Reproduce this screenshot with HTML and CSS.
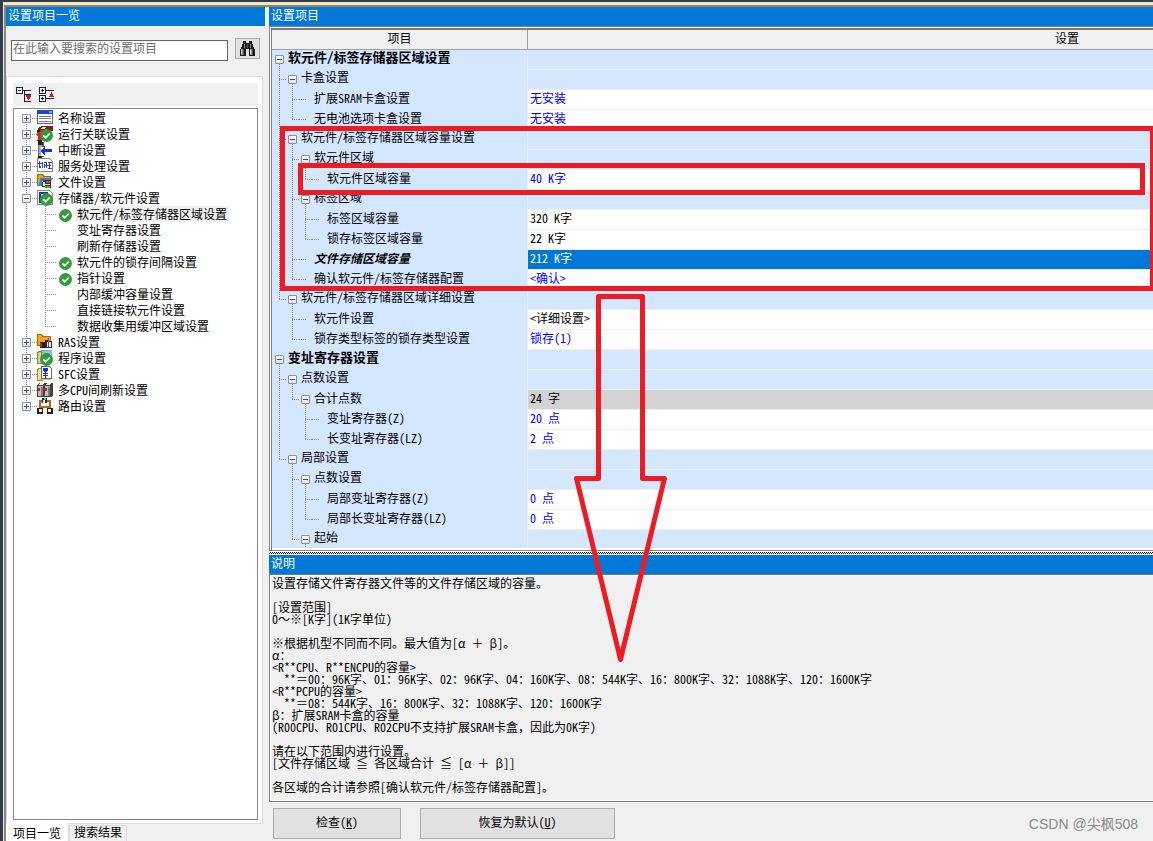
FILE: index.html
```html
<!DOCTYPE html>
<html lang="zh-CN">
<head>
<meta charset="utf-8">
<title>设置项目</title>
<link rel="stylesheet" href="styles.css">
</head>
<body>
<svg class="defs" aria-hidden="true">
  <symbol id="ok" viewBox="0 0 13 13"><circle cx="6.5" cy="6.5" r="6.5" fill="#339a3c"/><path d="M3.2 6.4l2.4 2.3 4.2-4.2" fill="none" stroke="#fff" stroke-width="1.7"/></symbol>
</svg>
<div class="app">
<span class="doc-tab"></span>
<div class="inner">
<aside class="side">
  <h2 class="title">设置项目一览</h2>
  <div class="search">
    <input type="text" class="search-box" aria-label="搜索设置项目" placeholder="在此输入要搜索的设置项目">
    <button type="button" class="find" aria-label="搜索">
      <svg width="17" height="16" viewBox="0 0 17 16" shape-rendering="crispEdges"><path fill="#1c1c1c" d="M4 0h3v2h3V0h3v3h1v3h1v2h1v7h-6V8H7v7H1V8h1V6h1V3h1z"/><path fill="#8d8d8d" d="M2 8h2v6H2zM11 8h2v6h-2zM5 3h1v4H5zM11 3h1v4h-1z"/><path fill="#555" d="M4 8h1v6H4zM13 8h1v6h-1zM8 3h1v4H8z"/><path fill="#ddd" d="M2 9h1v4H2zM11 9h1v4h-1z"/></svg>
    </button>
  </div>
  <div class="page">
    <div class="tools">
      <button type="button" class="tool" aria-label="全部折叠"><svg width="16" height="16" viewBox="0 0 16 16" shape-rendering="crispEdges"><path d="M.5.5h6v6h-6zM7 3.500h8M8.500 3.500v11h6M8.500 7.500h6" fill="none" stroke="#1d1d44"/><path d="M2 3.500h3" stroke="#1d1d44"/><path fill="#e01000" d="M10 8h5v2h-1v2h-1v1h-1v-1h-1v-2h-1z"/></svg></button>
      <button type="button" class="tool" aria-label="全部展开"><svg width="16" height="16" viewBox="0 0 16 16" shape-rendering="crispEdges"><path d="M.5.500h6v6h-6zM.5 8.500h6v6h-6zM7 3.500h8M7 11.500h8M2 3.500h3M3.500 2v3M2 11.500h3M3.500 10v3" fill="none" stroke="#1d1d44"/><path fill="#e01000" d="M12 5h1v2h1v2h1v1h-5V9h1V7h1z"/></svg></button>
    </div>
    <ul class="tree">
      <li><span class="s first"><button type="button" class="x plus" aria-label="展开"></button></span><span class="ic"><svg width="16" height="16" viewBox="0 0 16 16" shape-rendering="crispEdges"><path fill="#fff" stroke="#666" d="M.5.500h15v13H.5z"/><path fill="#1748d0" d="M0 0h16v4H0z"/><path fill="#6aa5ff" d="M12 1h3v2h-3z"/><path stroke="#77a" d="M2 6.500h12M2 8.500h12M2 11.500h12"/></svg></span><span class="lb">名称设置</span></li>
      <li><span class="s v"><button type="button" class="x plus" aria-label="展开"></button></span><span class="ic"><svg width="16" height="16" viewBox="0 0 16 16" shape-rendering="crispEdges"><path fill="#8c1717" d="M1 2l4-2h11v5H1z"/><path fill="#eee" d="M5 1h5l-3 2H3z"/><path fill="#f01818" d="M0 4h5v11H1z"/><path fill="#222" d="M0 4h3v2H0zM0 14h5v2H1z"/></svg><svg class="badge"><use href="#ok"/></svg></span><span class="lb">运行关联设置</span></li>
      <li><span class="s v"><button type="button" class="x plus" aria-label="展开"></button></span><span class="ic"><svg width="16" height="16" viewBox="0 0 16 16" shape-rendering="crispEdges"><path fill="#666" d="M1 0h6v15H1z"/><path fill="#aaa" d="M2 3h3v11H2z"/><path fill="#222" d="M1 0h5v3H1zM1 14h4v2H1z"/><path fill="#fff" d="M4 5h4v9H4z"/><path fill="#1530f0" d="M8 4v3h7v3H8v3H7v-1H6v-1H5v-1H4V8h1V7h1V6h1V4z"/></svg></span><span class="lb">中断设置</span></li>
      <li><span class="s v"><button type="button" class="x plus" aria-label="展开"></button></span><span class="ic"><svg width="16" height="16" viewBox="0 0 16 16" shape-rendering="crispEdges"><path fill="#fff" stroke="#888" d="M.5.500h12l3 3v10H.5z"/><path fill="none" stroke="#2b3fe0" d="M1 5.500h4M2.500 3v7M5.500 4v6M7 4.500h3M7.500 6v4M9.500 4v6M11 4.500h4M12.500 5v6M7 7.500h7M11 10.500h4M3.500 8v2"/></svg></span><span class="lb">服务处理设置</span></li>
      <li><span class="s v"><button type="button" class="x plus" aria-label="展开"></button></span><span class="ic"><svg width="16" height="16" viewBox="0 0 16 16" shape-rendering="crispEdges"><path fill="#f5a010" stroke="#a66200" d="M.5.500h5l1 2h7v9H.5z"/><path fill="#2389f0" d="M3 4h13l-2 3H5v5H2z"/><path fill="#333" d="M6 6h8v8H8v-1H5V8h1z"/><path fill="#eee" d="M6 8h2v4H6z"/><path fill="#f33" d="M9 7h4v2H9z"/><path fill="#fc9" d="M8 10h5v1H8z"/><path fill="#2b4" d="M8 12h5v2H8z"/></svg></span><span class="lb">文件设置</span></li>
      <li><span class="s v"><button type="button" class="x" aria-label="折叠"></button></span><span class="ic"><svg width="16" height="16" viewBox="0 0 16 16" shape-rendering="crispEdges"><path fill="#fff" stroke="#888" d="M.5.500h12l3 3v11H.5z"/><path fill="none" stroke="#1c2ab8" stroke-width="2" d="M3 13V3h7v5"/></svg><svg class="badge"><use href="#ok"/></svg></span><span class="lb">存储器/软元件设置</span></li>
      <li><span class="s v"></span><span class="s t"></span><span class="ic"><svg class="mark"><use href="#ok"/></svg></span><span class="lb sel">软元件/标签存储器区域设置</span></li>
      <li><span class="s v"></span><span class="s t"></span><span class="ic"></span><span class="lb">变址寄存器设置</span></li>
      <li><span class="s v"></span><span class="s t"></span><span class="ic"></span><span class="lb">刷新存储器设置</span></li>
      <li><span class="s v"></span><span class="s t"></span><span class="ic"><svg class="mark"><use href="#ok"/></svg></span><span class="lb">软元件的锁存间隔设置</span></li>
      <li><span class="s v"></span><span class="s t"></span><span class="ic"><svg class="mark"><use href="#ok"/></svg></span><span class="lb">指针设置</span></li>
      <li><span class="s v"></span><span class="s t"></span><span class="ic"></span><span class="lb">内部缓冲容量设置</span></li>
      <li><span class="s v"></span><span class="s t"></span><span class="ic"></span><span class="lb">直接链接软元件设置</span></li>
      <li><span class="s v"></span><span class="s l"></span><span class="ic"></span><span class="lb">数据收集用缓冲区域设置</span></li>
      <li><span class="s v"><button type="button" class="x plus" aria-label="展开"></button></span><span class="ic"><svg width="16" height="16" viewBox="0 0 16 16" shape-rendering="crispEdges"><path fill="#f9a41a" stroke="#b06c00" d="M.5.500h4l1 2h8v9H.5z"/><path fill="#222" d="M3 8h6v6H3zM8 6h3v2H8z"/><path fill="#d22" d="M3 9h2v4H3z"/><path fill="#e8ecff" stroke="#334" d="M9.500 7.500h5v6h-5z"/><path stroke="#55a" d="M11.500 4v9"/></svg></span><span class="lb">RAS设置</span></li>
      <li><span class="s v"><button type="button" class="x plus" aria-label="展开"></button></span><span class="ic"><svg width="16" height="16" viewBox="0 0 16 16" shape-rendering="crispEdges"><path fill="#fff" stroke="#8ab" d="M4.500.500h10v7h-10z"/><path fill="#7cc4f5" d="M5 1h10v3H5z"/><path fill="#d9d08a" stroke="#8a8340" d="M1.500 1.500h3v12h-4v-10z"/></svg><svg class="badge"><use href="#ok"/></svg></span><span class="lb">程序设置</span></li>
      <li><span class="s v"><button type="button" class="x plus" aria-label="展开"></button></span><span class="ic"><svg width="16" height="16" viewBox="0 0 16 16" shape-rendering="crispEdges"><path fill="#fbe08a" stroke="#a98c3a" d="M1.500 2.500h4v12h-5v-10z"/><path fill="#fff" stroke="#667" d="M4.500.500h8l2 2v10h-10z"/><path fill="#1b2fe0" d="M6 2h5v3h-1v1H7V5H6zM8 6h1v1h2v1H9v1h2v1H9v2H8v-2H6V9h2V8H6V7h2z"/><path fill="#e0c25c" d="M2 13h12v1H2z"/></svg></span><span class="lb">SFC设置</span></li>
      <li><span class="s v"><button type="button" class="x plus" aria-label="展开"></button></span><span class="ic"><svg width="16" height="16" viewBox="0 0 16 16" shape-rendering="crispEdges"><path fill="#444" d="M2 1h14v12l-2 2H0V4z"/><path fill="#bdbdbd" d="M1 4h5v10H1zM8 4h5v10H8z"/><path fill="#eee" d="M3 1h4L5 3H1zM10 1h4l-2 2H8z"/><path fill="#e11" d="M1 6h2v3H1zM8 6h2v3H8z"/><path fill="#777" d="M4 5h2v9H4zM11 5h2v9h-2z"/></svg></span><span class="lb">多CPU间刷新设置</span></li>
      <li><span class="s l"><button type="button" class="x plus" aria-label="展开"></button></span><span class="ic"><svg width="16" height="16" viewBox="0 0 16 16" shape-rendering="crispEdges"><path fill="none" stroke="#b5651d" stroke-width="2" d="M3 11V3h10v8M4 9h9"/><path fill="#222" d="M5 0h5v5H5zM0 10h6v6H0zM10 10h6v6h-6z"/><path fill="#eee" d="M6 2h2v3H6zM2 11h3v3H2zM11 11h3v3h-3z"/><path fill="#5c3" d="M7 0h2v2H7z"/></svg></span><span class="lb">路由设置</span></li>
    </ul>
  </div>
  <div class="tabs">
    <button type="button" class="tab on">项目一览</button>
    <button type="button" class="tab">搜索结果</button>
  </div>
</aside>
<main class="main">
  <h2 class="title">设置项目</h2>
  <div class="view">
    <table class="grid">
      <colgroup><col class="c1"><col></colgroup>
      <thead><tr><th>项目</th><th>设置</th></tr></thead>
      <tbody>
        <tr class="cat"><td><div class="n"><span class="g b0"><button type="button" class="x" aria-label="折叠"></button></span><b>软元件/标签存储器区域设置</b></div></td><td></td></tr>
        <tr class="cat"><td><div class="n"><span class="g t"></span><span class="g b0"><button type="button" class="x" aria-label="折叠"></button></span><span>卡盒设置</span></div></td><td></td></tr>
        <tr><td><div class="n"><span class="g v"></span><span class="g t"></span><span class="g h"></span><span>扩展SRAM卡盒设置</span></div></td><td class="blue">无安装</td></tr>
        <tr><td><div class="n"><span class="g v"></span><span class="g l"></span><span class="g h"></span><span>无电池选项卡盒设置</span></div></td><td class="blue">无安装</td></tr>
        <tr class="cat"><td><div class="n"><span class="g t"></span><span class="g b0"><button type="button" class="x" aria-label="折叠"></button></span><span>软元件/标签存储器区域容量设置</span></div></td><td></td></tr>
        <tr class="cat"><td><div class="n"><span class="g v"></span><span class="g t"></span><span class="g b0"><button type="button" class="x" aria-label="折叠"></button></span><span>软元件区域</span></div></td><td></td></tr>
        <tr><td><div class="n"><span class="g v"></span><span class="g v"></span><span class="g l"></span><span class="g h"></span><span>软元件区域容量</span></div></td><td class="blue">40 K字</td></tr>
        <tr class="cat"><td><div class="n"><span class="g v"></span><span class="g t"></span><span class="g b0"><button type="button" class="x" aria-label="折叠"></button></span><span>标签区域</span></div></td><td></td></tr>
        <tr><td><div class="n"><span class="g v"></span><span class="g v"></span><span class="g t"></span><span class="g h"></span><span>标签区域容量</span></div></td><td>320 K字</td></tr>
        <tr><td><div class="n"><span class="g v"></span><span class="g v"></span><span class="g l"></span><span class="g h"></span><span>锁存标签区域容量</span></div></td><td>22 K字</td></tr>
        <tr class="current"><td><div class="n"><span class="g v"></span><span class="g t"></span><span class="g h"></span><em>文件存储区域容量</em></div></td><td>212 K字</td></tr>
        <tr><td><div class="n"><span class="g v"></span><span class="g l"></span><span class="g h"></span><span>确认软元件/标签存储器配置</span></div></td><td class="blue">&lt;确认&gt;</td></tr>
        <tr class="cat"><td><div class="n"><span class="g l"></span><span class="g b0"><button type="button" class="x" aria-label="折叠"></button></span><span>软元件/标签存储器区域详细设置</span></div></td><td></td></tr>
        <tr><td><div class="n"><span class="g"></span><span class="g t"></span><span class="g h"></span><span>软元件设置</span></div></td><td>&lt;详细设置&gt;</td></tr>
        <tr><td><div class="n"><span class="g"></span><span class="g l"></span><span class="g h"></span><span>锁存类型标签的锁存类型设置</span></div></td><td class="blue">锁存(1)</td></tr>
        <tr class="cat"><td><div class="n"><span class="g b0"><button type="button" class="x" aria-label="折叠"></button></span><b>变址寄存器设置</b></div></td><td></td></tr>
        <tr class="cat"><td><div class="n"><span class="g t"></span><span class="g b0"><button type="button" class="x" aria-label="折叠"></button></span><span>点数设置</span></div></td><td></td></tr>
        <tr class="total"><td><div class="n"><span class="g v"></span><span class="g l"></span><span class="g b0"><button type="button" class="x" aria-label="折叠"></button></span><span>合计点数</span></div></td><td>24 字</td></tr>
        <tr><td><div class="n"><span class="g v"></span><span class="g"></span><span class="g t"></span><span class="g h"></span><span>变址寄存器(Z)</span></div></td><td class="blue">20 点</td></tr>
        <tr><td><div class="n"><span class="g v"></span><span class="g"></span><span class="g l"></span><span class="g h"></span><span>长变址寄存器(LZ)</span></div></td><td class="blue">2 点</td></tr>
        <tr class="cat"><td><div class="n"><span class="g l"></span><span class="g b0"><button type="button" class="x" aria-label="折叠"></button></span><span>局部设置</span></div></td><td></td></tr>
        <tr class="cat"><td><div class="n"><span class="g"></span><span class="g t"></span><span class="g b0"><button type="button" class="x" aria-label="折叠"></button></span><span>点数设置</span></div></td><td></td></tr>
        <tr><td><div class="n"><span class="g"></span><span class="g v"></span><span class="g t"></span><span class="g h"></span><span>局部变址寄存器(Z)</span></div></td><td class="blue">0 点</td></tr>
        <tr><td><div class="n"><span class="g"></span><span class="g v"></span><span class="g l"></span><span class="g h"></span><span>局部长变址寄存器(LZ)</span></div></td><td class="blue">0 点</td></tr>
        <tr class="cat"><td><div class="n"><span class="g"></span><span class="g l"></span><span class="g b0"><button type="button" class="x" aria-label="折叠"></button></span><span>起始</span></div></td><td></td></tr>
      </tbody>
    </table>
  </div>
  <div class="splitter"></div>
  <h2 class="title">说明</h2>
  <div class="desc">设置存储文件寄存器文件等的文件存储区域的容量。

[设置范围]
0<span class="w">～</span>※[K字](1K字单位)

※根据机型不同而不同。最大值为[<span class="w">α</span> <span class="w">＋</span> <span class="w">β</span>]。
<span class="w">α</span>：
&lt;R**CPU、R**ENCPU的容量&gt;
  **<span class="w">＝</span>00：96K字、01：96K字、02：96K字、04：160K字、08：544K字、16：800K字、32：1088K字、120：1600K字
&lt;R**PCPU的容量&gt;
  **<span class="w">＝</span>08：544K字、16：800K字、32：1088K字、120：1600K字
<span class="w">β</span>：扩展SRAM卡盒的容量
(R00CPU、R01CPU、R02CPU不支持扩展SRAM卡盒<span class="w">，</span>因此为0K字)

请在以下范围内进行设置。
[文件存储区域 ≦ 各区域合计 ≦ [<span class="w">α</span> <span class="w">＋</span> <span class="w">β</span>]]

各区域的合计请参照[确认软元件/标签存储器配置]。</div>
  <div class="actions">
    <button type="button" class="btn check">检查(<u>K</u>)</button>
    <button type="button" class="btn reset">恢复为默认(<u>U</u>)</button>
    <span class="credit">CSDN @尖枫508</span>
  </div>
</main>
</div>
<svg class="marks" width="1153" height="841" viewBox="0 0 1153 841" aria-hidden="true">
  <g fill="none" stroke="#ed1c24" stroke-width="5">
    <path d="M282.500 128.500h870v160h-870z"/>
    <path d="M300.500 165.500h842v27h-842z"/>
    <path stroke-linejoin="round" d="M598.500 296.500h44v182h22l-44 181-44-181h22z"/>
  </g>
</svg>
</div>
</body>
</html>
```
FILE: styles.css
```css
* { box-sizing: border-box; }
body {
  margin: 0;
  background: #f0f0f0;
  color: #000;
  font: 12px/12px "Noto Sans CJK SC", sans-serif;
  font-feature-settings: "hwid";
}
button, input {
  font: inherit;
  font-feature-settings: inherit;
  color: inherit;
  margin: 0;
  padding: 0;
  border-radius: 0;
}
ul { list-style: none; margin: 0; padding: 0; }
.defs { position: absolute; width: 0; height: 0; }
.app {
  position: relative;
  height: 100vh;
  overflow: hidden;
  border: solid #2f3b5c;
  border-width: 2px 0 0 3px;
}
.doc-tab { position: absolute; top: -2px; left: 749px; width: 158px; height: 2px; background: #ffe8a6; }
.inner {
  display: flex;
  gap: 4px;
  height: 100%;
  border: solid #ffe8a6;
  border-width: 3px 0 0 1px;
  box-shadow: inset 2px 2px #858585;
  padding: 2px 0 0 2px;
}
.title {
  flex: none;
  margin: 0;
  height: 19px;
  padding-left: 2px;
  background: #0078d7;
  color: #fff;
  font-size: 12px;
  font-weight: 400;
  line-height: 15px;
}
.side { flex: none; width: 259px; display: flex; flex-direction: column; }
.search { display: flex; gap: 7px; padding: 12px 5px 15px; align-items: flex-start; }
.search-box {
  flex: 1;
  min-width: 0;
  height: 21px;
  margin-top: 2px;
  padding: 0 1px 6px;
  border: 1px solid #646464;
  background: #fff;
}
.search-box::placeholder { color: #6d6d6d; opacity: 1; }
.find { width: 25px; height: 21px; border: 1px solid #adadad; background: #e1e1e1; display: grid; place-items: center; }
.page {
  flex: 1;
  min-height: 0;
  margin-right: 2px;
  padding: 6px 4px 3px 6px;
  border: 1px solid #dcdcdc;
  background: #fff;
  display: flex;
  flex-direction: column;
}
.tools { flex: none; display: flex; gap: 7px; height: 23px; margin-bottom: 2px; padding: 4px 3px; background: #f0f0f0; }
.tool { border: 0; background: none; width: 16px; height: 16px; }
.tool svg { display: block; }
.tree { flex: 1; min-height: 0; border: 1px solid #828790; padding: 1px 0 0 4px; }
.tree li { display: flex; height: 16px; line-height: 16px; white-space: nowrap; }
.s, .ic { flex: none; width: 19px; height: 16px; }
.ic { position: relative; }
.ic svg { display: block; }
.ic .badge { position: absolute; left: 3px; top: 3px; width: 13px; height: 13px; }
.ic .mark { width: 13px; height: 13px; margin: 3px 0 0 3px; }
.ic:has(.mark) { display: flex; }
.lb { padding: 0 2px; }
.sel { background: #f0f0f0; }

/* dotted guide lines */
.s, .g {
  --at: 8px;
  --mid: 8px;
  --v: repeating-linear-gradient(#8c8c8c 0 1px, transparent 1px 2px);
  --h: repeating-linear-gradient(90deg, #8c8c8c 0 1px, transparent 1px 2px);
  background-repeat: no-repeat;
}
.g { --at: 6px; --mid: 9px; flex: none; width: 13px; height: 20px; }
.v { background-image: var(--v); background-size: 1px 100%; background-position: var(--at) 0; }
.t, .l, .s:has(.x) {
  background-image: var(--v), var(--h);
  background-size: 1px 100%, calc(100% - var(--at)) 1px;
  background-position: var(--at) 0, var(--at) var(--mid);
}
.l, .s.l:has(.x) { background-size: 1px var(--mid), calc(100% - var(--at)) 1px; }
.s.first:has(.x) { background-size: 1px 8px, 11px 1px; background-position: 8px 8px, 8px 8px; }
.h { background-image: var(--h); background-size: 7px 1px; background-position: 0 var(--mid); }
.b0 { background-image: var(--v); background-size: 1px 8px; background-position: 6px 12px; }
.x {
  display: block;
  width: 9px;
  height: 9px;
  margin: 4px 0 0 4px;
  border: 1px solid #919191;
  border-radius: 1px;
  background: linear-gradient(#33508f, #33508f) center / 5px 1px no-repeat, linear-gradient(#fff, #e4e4e4);
}
.x.plus {
  background: linear-gradient(#33508f, #33508f) center / 5px 1px no-repeat,
    linear-gradient(#33508f, #33508f) center / 1px 5px no-repeat, linear-gradient(#fff, #e4e4e4);
}
.g .x { margin: 5px 0 0 2px; }

.tabs { display: flex; flex: none; height: 17px; align-items: flex-start; }
.tab { height: 17px; margin-top: 1px; padding: 0 4px 4px; border: 1px solid #dcdcdc; border-bottom: 0; background: #f0f0f0; }
.tab.on { margin-top: -1px; height: 18px; padding: 2px 7px 0; border-width: 0 1px 0 0; background: #fff; }

.main { flex: 1; min-width: 0; display: flex; flex-direction: column; }
.view {
  flex: 1 1 0;
  min-height: 0;
  overflow: hidden;
  border: solid #848484;
  border-width: 1px 0 1px 1px;
  padding: 3px 0 2px 2px;
  background: #fff;
  box-shadow: inset 1px 1px #fff, inset 2px 3px #7c7c7c;
  display: flex;
  flex-direction: column;
}
.grid {
  display: block;
  flex: 1 1 0;
  min-height: 0;
  overflow: hidden;
  width: calc(100% + 454px);
}
.grid thead, .grid tbody, .grid tr { display: grid; }
.grid tr { grid-template-columns: 256px 1fr; height: 20px; }
th {
  padding: 0;
  background: #f0f0f0;
  border: solid #a0a0a0;
  border-width: 0 1px 1px 0;
  font-weight: 400;
  line-height: 15px;
  text-align: center;
}
td { padding: 0; height: 20px; line-height: 15px; white-space: nowrap; }
.cat td { line-height: 13px; }
td:first-child { background: #d5e7ff; border-right: 1px solid #e6effb; }
td + td { padding-left: 2px; background: #fff; border-bottom: 1px solid #efefef; }
.cat td + td { background: #d5e7ff; }
.total td + td { background: #d3d3d3; }
.current td + td { background: #0078d7; color: #fff; }
.blue { color: #00f; }
.n { display: flex; padding-left: 1px; }
.n > :last-child { padding-left: 2px; }
.n b { font-size: 13px; }
.n em { font-weight: 700; }
.splitter {
  flex: none;
  height: 4px;
  border: solid #fff;
  border-width: 1px 0;
  background: repeating-conic-gradient(#000 0 25%, #fff 0 50%) 0 0 / 2px 2px;
}
.desc {
  flex: none;
  padding: 2px 2px 8px;
  border: solid #7a7a7a;
  border-width: 1px 0 1px 1px;
  box-shadow: inset 1px 1px #fff, inset 0 -1px #fff;
  white-space: pre-wrap;
}
.w { font-feature-settings: "fwid"; }
.actions { flex: none; display: flex; gap: 19px; padding: 6px 15px 2px 4px; }
.btn { height: 31px; border: 1px solid #adadad; background: #e1e1e1; padding-bottom: 3px; }
.check { width: 128px; }
.reset { width: 195px; }
.credit {
  margin-left: auto;
  align-self: center;
  color: #8a8a8a;
  font: 14px/18px "Liberation Sans", "Noto Sans CJK SC", sans-serif;
}
.marks { position: absolute; top: -2px; left: -3px; pointer-events: none; }
```
